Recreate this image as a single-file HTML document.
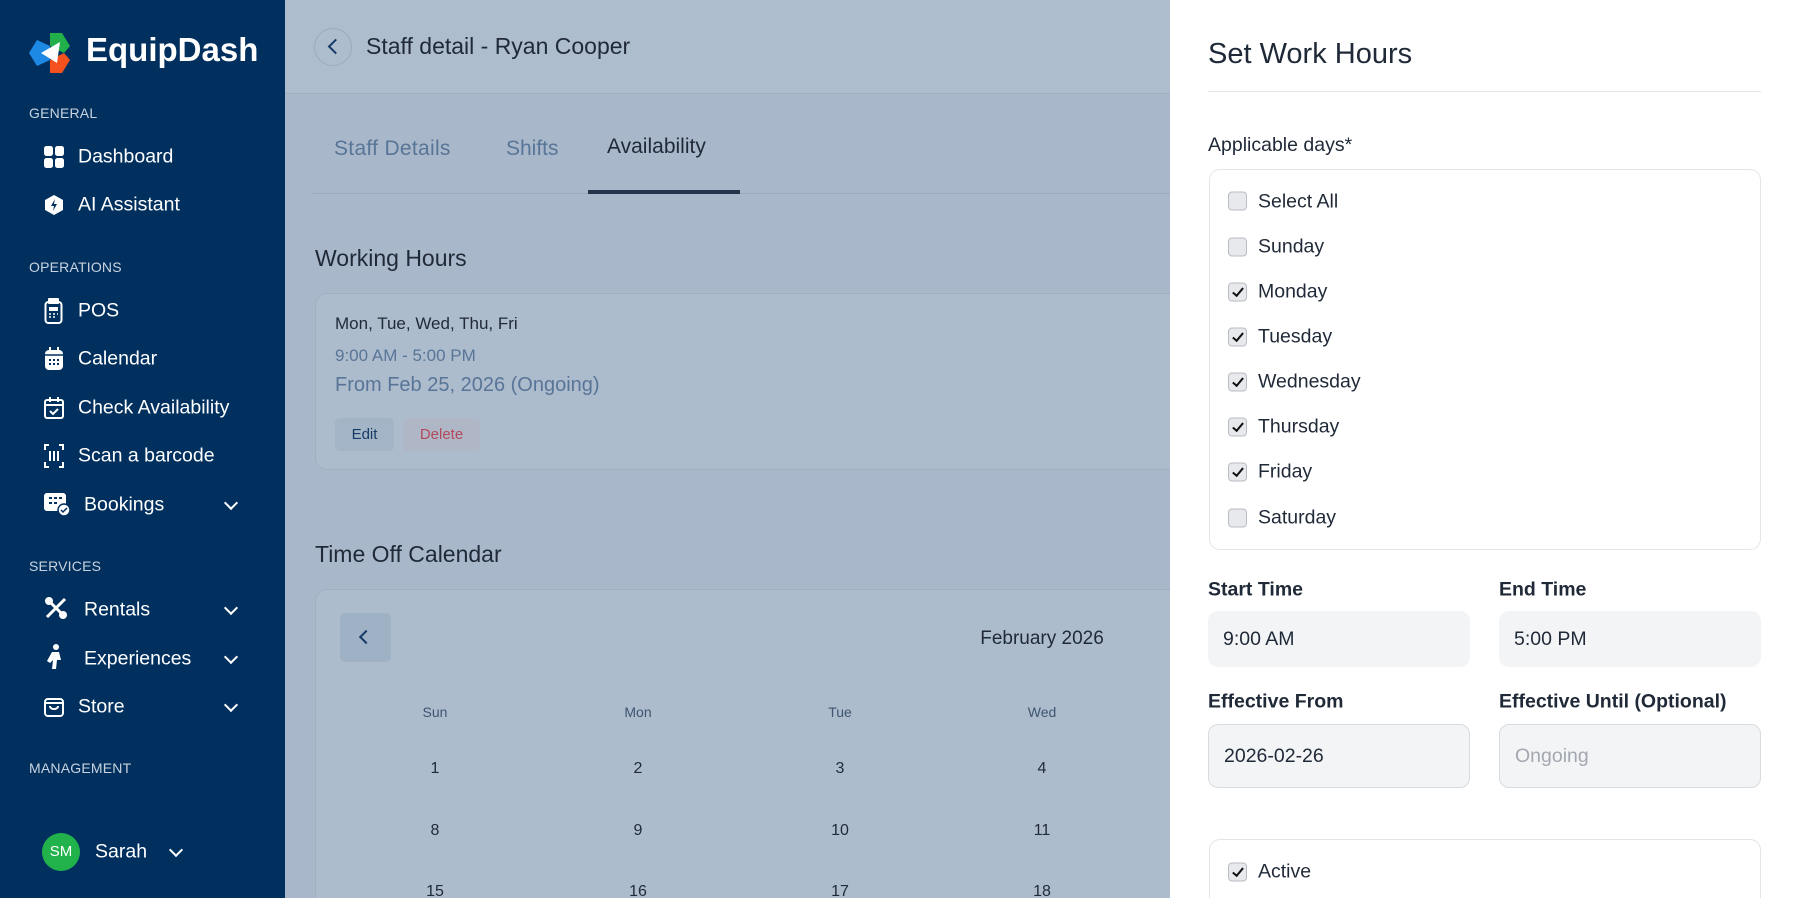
<!DOCTYPE html>
<html><head><meta charset="utf-8"><style>
*{box-sizing:border-box;margin:0;padding:0}
html,body{width:1800px;height:898px;overflow:hidden}
body{font-family:"Liberation Sans",sans-serif;background:#a8b8ca;color:#1f2937}
#w{position:relative;width:1800px;height:898px;overflow:hidden;background:#a8b8ca}
.a{position:absolute;white-space:nowrap}
#sb{position:absolute;left:0;top:0;width:285px;height:898px;background:#01305f;color:#fff}
.sec{position:absolute;left:29px;font-size:14px;color:#c9d3df;letter-spacing:.2px}
.it{position:absolute;left:78px;font-size:19.5px;transform:translateY(-50%)}
.ic{position:absolute;left:44px;transform:translateY(-50%)}
.chev{position:absolute;left:226px;width:10px;height:10px;border-right:2px solid #fff;border-bottom:2px solid #fff;transform:translateY(-70%) rotate(45deg)}
#pn{position:absolute;left:1170px;top:0;width:630px;height:898px;background:#fff}
.cb{position:absolute;left:1228px;width:19px;height:19px;border:1px solid #b8bcc4;background:#e8e9ec;border-radius:4px;transform:translateY(-50%)}
.cb.c::after{content:"";position:absolute;left:6px;top:2px;width:4px;height:9px;border-right:2px solid #111;border-bottom:2px solid #111;transform:rotate(40deg)}
.dl{position:absolute;left:1258px;font-size:19.5px;transform:translateY(-50%)}
.lb{position:absolute;font-size:19.5px;font-weight:bold;color:#1f2937;transform:translateY(-50%)}
.inp{position:absolute;height:56px;width:262px;border-radius:10px;background:#f3f4f6;font-size:19.5px;padding-left:15px;line-height:56px}
.cal{position:absolute;font-size:14px;color:#3f5470;transform:translate(-50%,-50%)}
.num{position:absolute;font-size:16px;color:#1f2937;transform:translate(-50%,-50%)}
</style></head><body><div id="w">
<div id="sb">
<svg class="a" style="left:29px;top:32px" width="42" height="42" viewBox="0 0 42 42"><polygon points="21,1 33,1 41,14 35,21 21,14" fill="#22b04b"/><polygon points="0,21 8,8 21,14 21,28 8,34" fill="#1e88e5"/><polygon points="21,28 35,21 41,28 33,41 21,41" fill="#f4511e"/><polygon points="12,21 31,10 28,31" fill="#fff"/></svg>
<div class="a" style="left:86px;top:31px;font-size:33px;font-weight:bold">EquipDash</div>
<div class="sec" style="top:105px">GENERAL</div>
<svg class="ic" style="top:157px" width="20" height="22" viewBox="0 0 20 22"><rect x="0" y="0" width="9" height="10" rx="2.5" fill="#fff"/><rect x="11" y="0" width="9" height="10" rx="2.5" fill="#fff"/><rect x="0" y="12" width="9" height="10" rx="2.5" fill="#fff"/><rect x="11" y="12" width="9" height="10" rx="2.5" fill="#fff"/></svg>
<div class="it" style="top:157px">Dashboard</div>
<svg class="ic" style="top:205px;left:45px" width="18" height="20" viewBox="0 0 18 20"><polygon points="9,0 18,5 18,15 9,20 0,15 0,5" fill="#fff"/><path d="M10 4 L6 11 H9 L8 16 L12 9 H9 Z" fill="#01305f"/></svg>
<div class="it" style="top:205px">AI Assistant</div>
<div class="sec" style="top:259px">OPERATIONS</div>
<svg class="ic" style="top:311px" width="20" height="26" viewBox="0 0 20 26"><rect x="1.5" y="4" width="16" height="21" rx="3" fill="none" stroke="#fff" stroke-width="2"/><rect x="4" y="0" width="11" height="6" rx="1" fill="#fff"/><rect x="5" y="9" width="9" height="4" fill="#fff"/><path d="M5 16h2M9 16h2M13 16h1M5 19h2M9 19h2" stroke="#fff" stroke-width="1.5"/></svg>
<div class="it" style="top:311px">POS</div>
<svg class="ic" style="top:359px" width="20" height="24" viewBox="0 0 20 24"><rect x="1" y="3" width="18" height="20" rx="4" fill="#fff"/><path d="M6 0v5M14 0v5" stroke="#fff" stroke-width="2"/><path d="M1 8h18" stroke="#01305f" stroke-width="1.5"/><path d="M5 13h2M9 13h2M13 13h2M5 17h2M9 17h2M13 17h2" stroke="#01305f" stroke-width="2"/></svg>
<div class="it" style="top:359px">Calendar</div>
<svg class="ic" style="top:408px" width="20" height="22" viewBox="0 0 20 22"><rect x="1" y="3" width="18" height="18" rx="2" fill="none" stroke="#fff" stroke-width="2"/><path d="M6 0v5M14 0v5M1 8h18M6 14l3 3 5-5" stroke="#fff" stroke-width="2" fill="none"/></svg>
<div class="it" style="top:408px">Check Availability</div>
<svg class="ic" style="top:456px" width="20" height="24" viewBox="0 0 20 24"><path d="M5 1H1v5M15 1h4v5M5 23H1v-5M15 23h4v-5M6 7v10M10 7v10M14 7v10" stroke="#fff" stroke-width="2" fill="none"/></svg>
<div class="it" style="top:456px">Scan a barcode</div>
<svg class="ic" style="top:503px" width="26" height="26" viewBox="0 0 26 26"><rect x="0" y="3" width="22" height="18" rx="3" fill="#fff"/><path d="M5 8h3M10 8h3M15 8h3M5 13h3M10 13h3" stroke="#01305f" stroke-width="2"/><circle cx="20" cy="20" r="6" fill="#fff" stroke="#01305f" stroke-width="1.5"/><path d="M17 20l2 2 4-4" stroke="#01305f" stroke-width="1.5" fill="none"/></svg>
<div class="it" style="top:505px;left:84px">Bookings</div><div class="chev" style="top:505px"></div>
<div class="sec" style="top:558px">SERVICES</div>
<svg class="ic" style="top:608px" width="24" height="24" viewBox="0 0 24 24"><path d="M3 21L21 3M3 3l18 18" stroke="#fff" stroke-width="3"/><circle cx="5" cy="5" r="4" fill="#fff"/><circle cx="19" cy="19" r="4" fill="#fff"/></svg>
<div class="it" style="top:610px;left:84px">Rentals</div><div class="chev" style="top:610px"></div>
<svg class="ic" style="top:657px" width="24" height="26" viewBox="0 0 24 26"><circle cx="12" cy="3" r="3" fill="#fff"/><path d="M8 8h7l2 8h-4l-1 9H8l1-9-3 3-3-2z" fill="#fff"/></svg>
<div class="it" style="top:659px;left:84px">Experiences</div><div class="chev" style="top:659px"></div>
<svg class="ic" style="top:706px" width="20" height="22" viewBox="0 0 20 22"><rect x="1" y="4" width="18" height="17" rx="3" fill="none" stroke="#fff" stroke-width="2"/><path d="M1 8h18M6 11c0 4 8 4 8 0" stroke="#fff" stroke-width="2" fill="none"/></svg>
<div class="it" style="top:707px">Store</div><div class="chev" style="top:707px"></div>
<div class="sec" style="top:760px">MANAGEMENT</div>
<div class="a" style="left:42px;top:833px;width:38px;height:38px;border-radius:50%;background:#21b24b;font-size:15px;line-height:38px;text-align:center">SM</div>
<div class="it" style="top:852px;left:95px">Sarah</div><div class="chev" style="top:852px;left:171px"></div>
</div>
<div class="a" style="left:285px;top:0;width:885px;height:94px;background:#adbdce;border-bottom:1px solid #9fb0c3"></div>
<div class="a" style="left:314px;top:28px;width:38px;height:38px;border-radius:50%;border:1px solid #9aabbf"></div>
<div class="a" style="left:330px;top:41px;width:11px;height:11px;border-left:2.5px solid #163a66;border-bottom:2.5px solid #163a66;transform:rotate(45deg)"></div>
<div class="a" style="left:366px;top:33px;font-size:23px">Staff detail - Ryan Cooper</div>
<div class="a" style="left:312px;top:193px;width:858px;height:1px;background:#9aabbf"></div>
<div class="a" style="left:334px;top:137px;font-size:21px;color:#587597;letter-spacing:0.3px">Staff Details</div>
<div class="a" style="left:506px;top:137px;font-size:21px;color:#587597">Shifts</div>
<div class="a" style="left:607px;top:135px;font-size:21px">Availability</div>
<div class="a" style="left:588px;top:190px;width:152px;height:4px;background:#24344a"></div>
<div class="a" style="left:315px;top:245px;font-size:23px">Working Hours</div>
<div class="a" style="left:315px;top:293px;width:900px;height:177px;background:#adbccd;border:1px solid #9fb0c3;border-radius:12px"></div>
<div class="a" style="left:335px;top:314px;font-size:17px">Mon, Tue, Wed, Thu, Fri</div>
<div class="a" style="left:335px;top:346px;font-size:17px;color:#587597">9:00 AM - 5:00 PM</div>
<div class="a" style="left:335px;top:374px;font-size:20px;color:#587597">From Feb 25, 2026 (Ongoing)</div>
<div class="a" style="left:335px;top:418px;width:59px;height:33px;background:#a3b4c7;border-radius:5px;font-size:15px;color:#163a66;text-align:center;line-height:33px">Edit</div>
<div class="a" style="left:403px;top:418px;width:77px;height:33px;background:#afb6c5;border-radius:5px;font-size:15px;color:#b54a5e;text-align:center;line-height:33px">Delete</div>
<div class="a" style="left:315px;top:541px;font-size:23px">Time Off Calendar</div>
<div class="a" style="left:315px;top:589px;width:900px;height:340px;background:#adbccd;border:1px solid #9fb0c3;border-radius:12px"></div>
<div class="a" style="left:340px;top:613px;width:51px;height:49px;background:#9fb1c5;border-radius:5px"></div>
<div class="a" style="left:361px;top:632px;width:10px;height:10px;border-left:2.5px solid #163a66;border-bottom:2.5px solid #163a66;transform:rotate(45deg)"></div>
<div class="num" style="left:1042px;top:639px;font-size:19px">February 2026</div>
<div class="cal" style="left:435px;top:712px">Sun</div><div class="cal" style="left:638px;top:712px">Mon</div><div class="cal" style="left:840px;top:712px">Tue</div><div class="cal" style="left:1042px;top:712px">Wed</div>
<div class="num" style="left:435px;top:769px">1</div><div class="num" style="left:638px;top:769px">2</div><div class="num" style="left:840px;top:769px">3</div><div class="num" style="left:1042px;top:769px">4</div>
<div class="num" style="left:435px;top:831px">8</div><div class="num" style="left:638px;top:831px">9</div><div class="num" style="left:840px;top:831px">10</div><div class="num" style="left:1042px;top:831px">11</div>
<div class="num" style="left:435px;top:892px">15</div><div class="num" style="left:638px;top:892px">16</div><div class="num" style="left:840px;top:892px">17</div><div class="num" style="left:1042px;top:892px">18</div>
<div id="pn"></div>
<div class="a" style="left:1208px;top:38px;font-size:29px;color:#1f2937">Set Work Hours</div>
<div class="a" style="left:1208px;top:91px;width:553px;height:1px;background:#e2e4e8"></div>
<div class="a" style="left:1208px;top:134px;font-size:19.5px">Applicable days*</div>
<div class="a" style="left:1209px;top:169px;width:552px;height:381px;border:1px solid #e3e5e9;border-radius:11px"></div>
<div class="cb" style="top:201px"></div><div class="dl" style="top:202px">Select All</div>
<div class="cb" style="top:247px"></div><div class="dl" style="top:247px">Sunday</div>
<div class="cb c" style="top:292px"></div><div class="dl" style="top:292px">Monday</div>
<div class="cb c" style="top:337px"></div><div class="dl" style="top:337px">Tuesday</div>
<div class="cb c" style="top:382px"></div><div class="dl" style="top:382px">Wednesday</div>
<div class="cb c" style="top:427px"></div><div class="dl" style="top:427px">Thursday</div>
<div class="cb c" style="top:472px"></div><div class="dl" style="top:472px">Friday</div>
<div class="cb" style="top:518px"></div><div class="dl" style="top:518px">Saturday</div>
<div class="lb" style="left:1208px;top:590px">Start Time</div>
<div class="lb" style="left:1499px;top:590px">End Time</div>
<div class="inp" style="left:1208px;top:611px">9:00 AM</div>
<div class="inp" style="left:1499px;top:611px">5:00 PM</div>
<div class="lb" style="left:1208px;top:702px">Effective From</div>
<div class="lb" style="left:1499px;top:702px">Effective Until (Optional)</div>
<div class="inp" style="left:1208px;top:724px;height:64px;line-height:62px;border:1px solid #d8dbe0">2026-02-26</div>
<div class="inp" style="left:1499px;top:724px;height:64px;line-height:62px;border:1px solid #d8dbe0;color:#a3a8b0">Ongoing</div>
<div class="a" style="left:1209px;top:839px;width:552px;height:80px;border:1px solid #e3e5e9;border-radius:11px"></div>
<div class="cb c" style="top:872px"></div><div class="dl" style="top:872px">Active</div>
</div></body></html>
